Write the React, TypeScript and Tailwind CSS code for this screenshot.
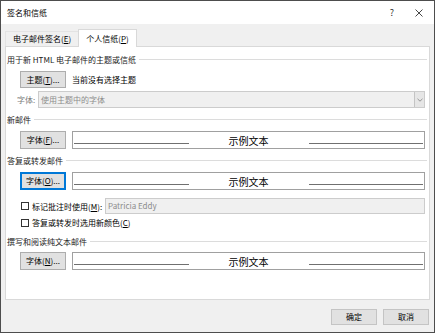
import { ReactNode } from "react";

const font = { fontFamily: '"Noto Sans CJK SC", "Noto Sans", sans-serif' };

function Btn({ children, focused }: { children: ReactNode; focused?: boolean }) {
  return (
    <div
      className={`flex h-[18px] w-[46px] shrink-0 items-center justify-center bg-[#e1e1e1] text-[8px] text-black ${
        focused ? "border border-[#0078d7] shadow-[inset_0_0_0_1px_#0078d7]" : "border border-[#adadad]"
      }`}
    >
      {children}
    </div>
  );
}

function Header({ text }: { text: string }) {
  return (
    <div className="flex h-[11px] items-center gap-[3px] pl-[1px] pr-[2px] text-[8px] leading-[11px] text-[#1a1a1a]">
      <span className="whitespace-nowrap">{text}</span>
      <div className="h-px flex-1 bg-[#dcdcdc]" />
    </div>
  );
}

function Sample() {
  return (
    <div className="flex h-[18px] flex-1 items-start border border-[#a0a0a0] bg-white px-px">
      <div className="mt-[11px] h-px flex-1 bg-[#707070]" />
      <span className="mx-[40px] mt-[2px] text-[10px] leading-[13px] text-black">示例文本</span>
      <div className="mt-[11px] h-px flex-1 bg-[#707070]" />
    </div>
  );
}

function FontRow({ label, k }: { label: string; k: string }) {
  return (
    <div className="flex gap-[6px] pl-[14px] pr-[4px]">
      <Btn focused={k === "O"}>
        {label}(<u>{k}</u>)...
      </Btn>
      <Sample />
    </div>
  );
}

function Check({ children }: { children: ReactNode }) {
  return (
    <div className="flex items-center gap-[3px]">
      <div className="h-[8px] w-[8px] border border-[#333] bg-white" />
      <span className="whitespace-nowrap text-[8px] leading-[11px] text-black">{children}</span>
    </div>
  );
}

export default function App() {
  return (
    <div
      style={font}
      className="flex h-[333px] w-[435px] flex-col border border-[#4d4d4d] bg-[#f0f0f0]"
    >
      <div className="flex h-[23px] items-center bg-white pl-[6px] pr-[11px] text-[8px] text-black">
        <span>签名和信纸</span>
        <span className="ml-auto mr-[21px] text-[9px] text-[#333]">?</span>
        <svg width="8" height="8" viewBox="0 0 8 8" className="text-[#333]">
          <path d="M0.5 0.5 L7.5 7.5 M7.5 0.5 L0.5 7.5" stroke="currentColor" strokeWidth="0.9" />
        </svg>
      </div>

      <div className="flex flex-1 flex-col px-[4px] pt-[5px]">
        <div className="flex h-[17px] items-end">
          <div className="flex h-[15px] items-center border-t border-l border-[#e3e3e3] px-[7px] text-[8px] text-black">
            电子邮件签名(<u>E</u>)
          </div>
          <div className="relative z-10 -mb-px flex h-[18px] items-center border border-b-0 border-[#d9d9d9] bg-white px-[7px] text-[8px] text-black">
            个人信纸(<u>P</u>)
          </div>
        </div>

        <div className="flex h-[254px] flex-col border border-[#d9d9d9] bg-white">
          <div className="mt-[7px]">
            <Header text="用于新 HTML 电子邮件的主题或信纸" />
          </div>
          <div className="mt-[6px] flex h-[17px] items-center gap-[6px] pl-[14px]">
            <div className="flex h-[17px] w-[46px] items-center justify-center border border-[#adadad] bg-[#e1e1e1] text-[8px]">
              主题(<u>T</u>)...
            </div>
            <span className="text-[8px] text-black">当前没有选择主题</span>
          </div>
          <div className="mt-[3px] flex h-[17px] items-center pl-[11px] pr-[4px]">
            <span className="w-[21px] text-[8px] text-[#7a7a7a]">字体:</span>
            <div className="flex h-[17px] flex-1 items-center border border-[#cccccc] bg-[#f0f0f0] pl-[2px]">
              <span className="text-[8px] text-[#8c8c8c]">使用主题中的字体</span>
              <div className="ml-auto flex h-full w-[10px] items-center justify-center border-l border-[#c4c4c4] bg-[#e6e6e6]">
                <svg width="6" height="4" viewBox="0 0 6 4">
                  <path d="M0.5 0.8 L3 3.2 L5.5 0.8" fill="none" stroke="#8c8c8c" strokeWidth="0.9" />
                </svg>
              </div>
            </div>
          </div>

          <div className="mt-[6px]">
            <Header text="新邮件" />
          </div>
          <div className="mt-[6px]">
            <FontRow label="字体" k="F" />
          </div>

          <div className="mt-[6px]">
            <Header text="答复或转发邮件" />
          </div>
          <div className="mt-[6px]">
            <FontRow label="字体" k="O" />
          </div>

          <div className="mt-[8px] flex h-[16px] items-center pl-[15px] pr-[4px]">
            <div className="w-[84px]">
              <Check>
                标记批注时使用(<u>M</u>):
              </Check>
            </div>
            <div className="flex h-[16px] flex-1 items-center border border-[#cccccc] bg-[#f0f0f0] pl-[2px] text-[8px] text-[#8c8c8c]">
              Patricia Eddy
            </div>
          </div>
          <div className="mt-[3px] pl-[15px]">
            <Check>
              答复或转发时选用新颜色(<u>C</u>)
            </Check>
          </div>

          <div className="mt-[8px]">
            <Header text="撰写和阅读纯文本邮件" />
          </div>
          <div className="mt-[5px]">
            <FontRow label="字体" k="N" />
          </div>
        </div>

        <div className="mt-[9px] flex justify-end gap-[6px] pr-[1px]">
          <div className="flex h-[16px] w-[46px] items-center justify-center border border-[#c4c4c4] bg-[#e1e1e1] text-[8px]">
            确定
          </div>
          <div className="flex h-[16px] w-[46px] items-center justify-center border border-[#c4c4c4] bg-[#e1e1e1] text-[8px]">
            取消
          </div>
        </div>
      </div>
    </div>
  );
}
